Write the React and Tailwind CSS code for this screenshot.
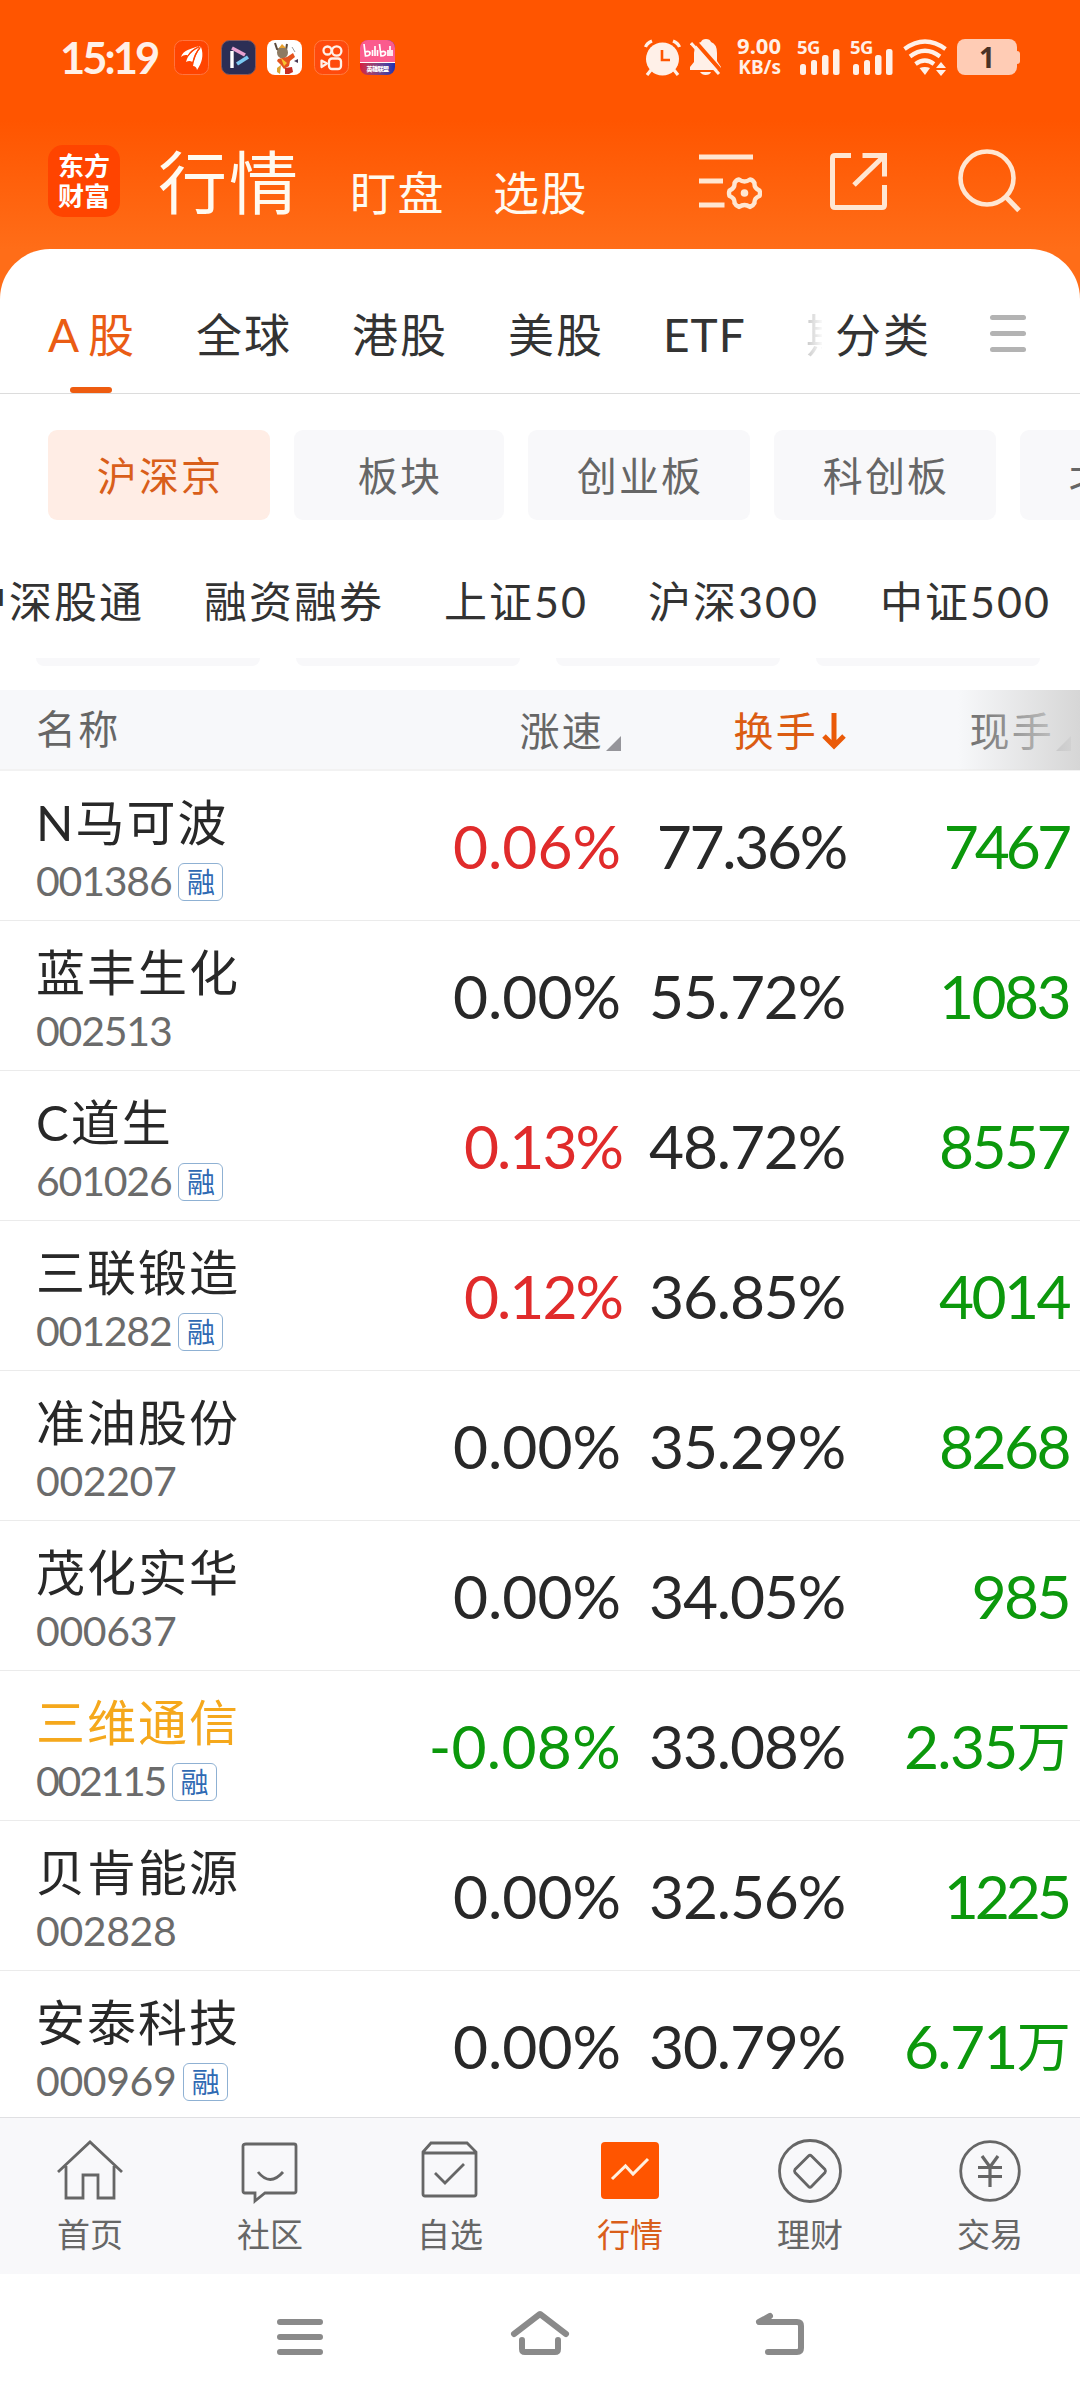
const quotes = [
  { name: 'N马可波', code: '001386', margin: true, speed: '0.06%', turnover: '77.36%', hand: '7467' },
  { name: '蓝丰生化', code: '002513', speed: '0.00%', turnover: '55.72%', hand: '1083' },
  { name: 'C道生', code: '601026', margin: true, speed: '0.13%', turnover: '48.72%', hand: '8557' },
  { name: '三联锻造', code: '001282', margin: true, speed: '0.12%', turnover: '36.85%', hand: '4014' },
  { name: '准油股份', code: '002207', speed: '0.00%', turnover: '35.29%', hand: '8268' },
  { name: '茂化实华', code: '000637', speed: '0.00%', turnover: '34.05%', hand: '985' },
  { name: '三维通信', code: '002115', margin: true, watched: true, speed: '-0.08%', turnover: '33.08%', hand: '2.35万' },
  { name: '贝肯能源', code: '002828', speed: '0.00%', turnover: '32.56%', hand: '1225' },
  { name: '安泰科技', code: '000969', margin: true, speed: '0.00%', turnover: '30.79%', hand: '6.71万' },
];

function speedColor(v) {
  if (v.startsWith('-')) return 'text-[#0c980c]';
  return v === '0.00%' ? 'text-[#282828]' : 'text-[#e02b2b]';
}

// Letter spacing by column; values with a 1 are set a little tighter.
function codeSpacing(v) {
  const ones = v.split('1').length - 1;
  if (ones > 1) return 'tracking-[-2.300px]';
  return ones ? 'tracking-[-1.200px]' : 'tracking-[-0.400px]';
}

function speedSpacing(v) {
  if (v.startsWith('-')) return 'tracking-[0.300px]';
  return v.includes('1') ? 'tracking-[-2px] mr-[-1px]' : 'tracking-normal';
}

function turnoverSpacing(v) {
  return v.startsWith('77') ? 'tracking-[-2.300px] mr-[-1px]' : 'tracking-[-1.200px]';
}

function handSpacing(v) {
  if (v.includes('万')) return 'tracking-[-1.700px]';
  return v === '7467' || v === '1225' ? 'tracking-[-4px] pr-[1px]' : 'tracking-[-2.600px]';
}

function AppBadges() {
  return (
    <div className="ml-[17px] flex gap-[11.500px]">
      <svg width="35" height="35" viewBox="0 0 35 35">
        <rect x=".5" y=".5" width="34" height="34" rx="8" fill="#ff4400" stroke="#ff7440" />
        <path d="M7 17C9 10 17 9 25 6C19 9 15 12 14 15.500C11 14.500 9 15.500 7 17Z" fill="#fff" />
        <path d="M12 22C14 14 20 9 26.500 6C22 11 20 16 18.500 22C16 20.500 14 21 12 22Z" fill="#fff" />
        <path d="M19 26C20 19 23 12 27 7C30 15 28 23 23 30C22.500 27 21 26 19 26Z" fill="#fff" />
        <path d="M14 16Q18 10 25 7M19 22Q21 13 26 8" stroke="#ff4400" strokeWidth="1.200" fill="none" />
      </svg>
      <svg width="35" height="35" viewBox="0 0 35 35">
        <rect x=".5" y=".5" width="34" height="34" rx="8" fill="#2c2e55" stroke="#8a5a5a" />
        <path d="M11 11V28" stroke="#fff" strokeWidth="3.4" />
        <path d="M11 8L24 15" stroke="#e9a2d2" strokeWidth="3.6" />
        <path d="M16 24L27 17" stroke="#7cc8f2" strokeWidth="3.8" />
      </svg>
      <svg width="35" height="35" viewBox="0 0 35 35">
        <rect width="35" height="35" rx="8" fill="#fff" />
        <path d="M8 3L10 9L12 10M20 4L19 10" fill="none" stroke="#5b4a3c" strokeWidth="2" />
        <ellipse cx="15.500" cy="12.500" rx="5.500" ry="6" fill="#8d7a62" />
        <path d="M12 8L15 4L19 8Z" fill="#e8a02d" />
        <path d="M11 19L20 17L26 13L28 17L23 21L22 26L17 29L14 25L10 21Z" fill="#e5531d" />
        <path d="M14 18L20 23L17 26Z" fill="#f7c531" />
        <path d="M10 28L14 25L13 34L10 32Z" fill="#dca32f" />
        <path d="M18 28L25 27L26 32L22 34H18Z" fill="#c62d22" />
        <path d="M27 21L31 19L31 23Z" fill="#473752" />
        <path d="M25 7L28 12" stroke="#999" />
      </svg>
      <svg width="35" height="35" viewBox="0 0 35 35" fill="none">
        <rect x=".5" y=".5" width="34" height="34" rx="8" fill="#ff4a0c" stroke="#ff7a40" />
        <circle cx="13.500" cy="10.500" r="4" stroke="#fff0e8" strokeWidth="2.300" />
        <circle cx="22.700" cy="11" r="4.700" stroke="#fff0e8" strokeWidth="2.300" />
        <rect x="15" y="18.500" width="12" height="10.500" rx="3" stroke="#fff0e8" strokeWidth="2.300" />
        <path d="M7.500 20.500L13 23.500L7.500 27Z" stroke="#fff0e8" strokeWidth="2.200" strokeLinejoin="round" />
      </svg>
      <div className="flex h-[35px] w-[35px] flex-col overflow-hidden rounded-[8px] bg-gradient-to-r from-[#d8173d] to-[#1c2fb4]">
        <div className="flex h-[23px] items-center justify-center border-b border-white bg-[#fb5b8e]">
          <svg width="31" height="15" viewBox="0 0 31 15" fill="none" stroke="#fff" strokeWidth="1.700">
            <path d="M2 1L3.500 13Q8.500 13 8 9.500Q7 7.500 3 9M10.500 7V13M13 3V13M15.500 7V13M17.500 1L19 13Q24 13 23.500 9.500Q22.500 7.500 19 9M26 7V13M28 3V13M30 7V13" />
          </svg>
        </div>
        <span className="text-center text-[6px] leading-[11px] font-black tracking-[-0.500px] whitespace-nowrap text-white">英雄联盟</span>
      </div>
    </div>
  );
}

function Signal() {
  return (
    <div className="relative h-[36px] w-[43px]">
      <span className="absolute top-[-1px] left-0 font-['Noto_Sans'] text-[18.500px] leading-[17px] font-bold tracking-[-0.500px] text-[#fff0e8]">5G</span>
      <svg className="absolute right-0 bottom-0" width="40" height="26" fill="#fff0e8">
        <rect x="0" y="15" width="6" height="11" rx="2.500" />
        <rect x="11" y="11" width="6" height="15" rx="2.500" />
        <rect x="22" y="6" width="6.500" height="20" rx="2.500" />
        <rect x="33" y="0" width="6.500" height="26" rx="2.500" />
      </svg>
    </div>
  );
}

function StatusBar() {
  return (
    <div className="flex h-[114px] items-center pl-[60px] pr-[60px]">
      <span className="w-[97px] font-['Lato'] text-[43.500px] leading-[44px] font-bold tracking-[-3px] whitespace-nowrap text-[#fff0e8]">15:19</span>
      <AppBadges />
      <div className="ml-auto flex items-center">
        <svg width="37" height="37" viewBox="0 0 37 37">
          <circle cx="18.500" cy="20" r="16.500" fill="#fff0e8" />
          <path d="M18 11V21H26" fill="none" stroke="#ff5500" strokeWidth="2.600" />
          <path d="M1.500 8Q3 4 8 2M35.500 8Q34 4 29 2M7 31L3 36M30 31L34 36" stroke="#fff0e8" strokeWidth="3.200" fill="none" />
        </svg>
        <svg className="ml-[9px]" width="32" height="37" viewBox="0 0 32 37">
          <path d="M0 31V28L4 23V14Q5 4 11 3Q12 0 16 0Q20 0 21 3Q27 5 27 14V22L31 28V31Z" fill="#fff0e8" />
          <path d="M10 33H21Q20 36 15.500 36Q12 36 10 33Z" fill="#fff0e8" />
          <path d="M2 2L30 34" stroke="#ff5500" strokeWidth="4" transform="translate(2 -1)" />
          <path d="M1 4L29 35" stroke="#fff0e8" strokeWidth="3" />
        </svg>
        <div className="-mt-[3px] ml-[11px] flex w-[48px] flex-col items-end font-['Noto_Sans'] text-[22px] leading-[22px] font-bold whitespace-nowrap text-[#fff0e8]">
          <span>9.00</span>
          <span className="text-[19px] leading-[22px]">KB/s</span>
        </div>
        <div className="ml-[16px] flex gap-[10px]">
          <Signal />
          <Signal />
        </div>
        <svg className="ml-[10px]" width="44" height="37" viewBox="0 0 44 37" fill="none" stroke="#fff0e8" strokeWidth="4.200">
          <path d="M1.500 10Q22 -5 42.500 10" />
          <path d="M7 17.500Q22 6 37 17.500" />
          <path d="M12.500 25Q22 18 31 25" />
          <path d="M16.500 29Q22 27 27 29L22 36Z" fill="#fff0e8" stroke="none" />
          <path d="M38 23L43 29H33ZM38 37L43 31H33Z" fill="#fff0e8" stroke="none" />
        </svg>
        <div className="ml-[10px] flex items-center">
          <div className="flex h-[36px] w-[60px] items-center justify-center rounded-[8px] bg-[#ffccb5] font-['Noto_Sans'] text-[28px] leading-[28px] font-bold text-[#4a3226]">1</div>
          <div className="h-[13px] w-[3px] rounded-r-[3px] bg-[#ffccb5]" />
        </div>
      </div>
    </div>
  );
}

function Header() {
  return (
    <div className="flex h-[135px] items-start pl-[48px] pr-[58px] text-[#fffaf0]">
      <div className="mt-[31px] flex h-[72px] w-[72px] flex-col items-center justify-center rounded-[15px] bg-[#ff4400] text-[26px] leading-[30px] font-bold text-white">
        <span>东方</span>
        <span>财富</span>
      </div>
      <span className="ml-[38px] mt-[29px] w-[146px] text-[69px] leading-[80px] tracking-[2px] whitespace-nowrap">行情</span>
      <span className="ml-[46px] mt-[53px] w-[96px] text-[46px] leading-[52px] tracking-[1.500px] whitespace-nowrap">盯盘</span>
      <span className="ml-[47px] mt-[53px] w-[96px] text-[46px] leading-[52px] tracking-[1.500px] whitespace-nowrap">选股</span>
      <svg className="ml-auto mt-[38px]" width="63" height="60" viewBox="0 0 63 60" fill="none" stroke="#ffe6d2" strokeWidth="5">
        <path d="M0 5H54M0 29H24M0 53H25.500" />
        <circle cx="45.500" cy="41" r="3.800" fill="#ffe6d2" stroke="none" />
        <path strokeWidth="4.400" strokeLinejoin="round" d="M40 27.500Q45.500 31.500 51 27.500Q54 28 55.500 31Q55 36 60.500 38.500Q61.500 41 60.500 44Q55 46 55.500 51Q54 54 51 55Q45.500 51 40 55Q37 54 35.500 51Q36 46 30.500 44Q29.500 41 30.500 38.500Q36 36 35.500 31Q37 28 40 27.500Z" />
      </svg>
      <svg className="ml-[67px] mt-[37px]" width="60" height="62" viewBox="0 0 60 62" fill="none" stroke="#ffe6d2" strokeWidth="5">
        <path d="M22 4.500H6Q3.500 4.500 3.500 7V54Q3.500 56.500 6 56.500H53Q55.500 56.500 55.500 54V34" />
        <path d="M33.500 4.500H55.500V25.500M55 5L25 34" />
      </svg>
      <svg className="ml-[69px] mt-[34px]" width="64" height="66" viewBox="0 0 64 66" fill="none" stroke="#ffe6d2" strokeWidth="4.600">
        <circle cx="29" cy="30" r="26.500" />
        <path d="M48 49L61 62.500" strokeWidth="5" />
      </svg>
    </div>
  );
}

function MarketTabs() {
  return (
    <div className="flex h-[145px] items-center border-b border-[#dcdcdc] pl-[48px] text-[46px] leading-[60px] tracking-[2px] whitespace-nowrap text-[#333]">
      <div className="relative flex h-full w-[86px] items-center text-[#ea5c14]">
        <span className="mt-[28px] w-[40px] shrink-0">A</span>
        <span className="mt-[28px] shrink-0">股</span>
        <div className="absolute bottom-0 left-[22px] h-[6px] w-[42px] rounded-full bg-[#ee5c10]" />
      </div>
      <div className="mt-[28px] flex w-[688px] overflow-hidden pl-[62px]">
        <span className="w-[156px] shrink-0">全球</span>
        <span className="w-[156px] shrink-0">港股</span>
        <span className="w-[155px] shrink-0">美股</span>
        <span className="w-[143px] shrink-0 tracking-[1px]">ETF</span>
        <span className="w-[18px] shrink-0 overflow-hidden bg-gradient-to-r from-[#c8c8c8] to-white bg-clip-text text-transparent">期</span>
      </div>
      <span className="mt-[28px] ml-[13px]">分类</span>
      <div className="mt-[24px] ml-[59px] flex flex-col gap-[11px]">
        <div className="h-[5px] w-[36px] rounded-full bg-[#b3b3b3]" />
        <div className="h-[5px] w-[36px] rounded-full bg-[#b3b3b3]" />
        <div className="h-[5px] w-[36px] rounded-full bg-[#b3b3b3]" />
      </div>
    </div>
  );
}

function BoardChips() {
  const chip = 'flex h-[90px] shrink-0 items-center justify-center rounded-[9px] pt-[2px] pl-[2px] ';
  return (
    <div className="mt-[36px] flex gap-[24px] overflow-hidden pl-[48px] text-[40px] leading-[48px] tracking-[2.200px] whitespace-nowrap text-[#666]">
      <div className={chip + 'w-[222px] bg-[#ffede5] text-[#d95e1a]'}>沪深京</div>
      <div className={chip + 'w-[210px] bg-[#f8f8fa]'}>板块</div>
      <div className={chip + 'w-[222px] bg-[#f8f8fa]'}>创业板</div>
      <div className={chip + 'w-[222px] bg-[#f8f8fa]'}>科创板</div>
      <div className={chip + 'w-[222px] bg-[#f8f8fa]'}>北交所</div>
    </div>
  );
}

function IndexTabs() {
  return (
    <div className="mt-[52px] flex overflow-hidden text-[43px] leading-[60px] tracking-[2px] whitespace-nowrap text-[#333]">
      <span className="-ml-[36px] w-[240px] shrink-0">沪深股通</span>
      <span className="w-[240px] shrink-0">融资融券</span>
      <span className="w-[204px] shrink-0">上证50</span>
      <span className="w-[232px] shrink-0">沪深300</span>
      <span className="shrink-0">中证500</span>
    </div>
  );
}

function CardEdges() {
  return (
    <div className="mt-[26px] flex h-[32px] gap-[36px] overflow-hidden pl-[36px]">
      {[0, 1, 2, 3].map((i) => (
        <div key={i} className="h-[8px] w-[224px] shrink-0 rounded-b-[9px] bg-[#f8f8fa]" />
      ))}
    </div>
  );
}

function SortCorner() {
  return (
    <svg className="mt-[28px] ml-[2px]" width="15" height="15" viewBox="0 0 15 15">
      <path d="M15 0V15H0Z" fill="#95959a" />
    </svg>
  );
}

function TableHead() {
  return (
    <div className="relative grid h-[81px] grid-cols-[397px_224px_225px_225px] items-center border-b-2 border-[#f2f2f2] bg-[#f7f8fa] text-[40px] leading-[50px] tracking-[2.200px] text-[#666]">
      <span className="-mt-[1px] pl-[36px]">名称</span>
      <div className="flex items-center justify-end"><span className="mt-[3px]">涨速</span><SortCorner /></div>
      <div className="flex items-center justify-end text-[#db5c12]">
        <span className="mt-[3px]">换手</span>
        <svg className="ml-[4px] mt-[3px]" width="24" height="38" viewBox="0 0 24 38" fill="none" stroke="#ea5a08" strokeWidth="5">
          <path d="M12 1V33M2 24L12 34L22 24" />
        </svg>
      </div>
      <div className="flex items-center justify-end"><span className="mt-[3px]">现手</span><SortCorner /></div>
      <div className="absolute top-0 right-0 h-[80px] w-[122px] bg-gradient-to-r from-[#f3f3f300] to-[#d6d6d6]" />
    </div>
  );
}

function QuoteRow({ q }) {
  const cell = 'pt-[35px] text-right text-[60.500px] leading-[80px] whitespace-nowrap tabular-nums ';
  return (
    <div className="grid h-[150px] grid-cols-[397px_224px_224px_224px] border-b border-[#ebebeb]">
      <div className="pl-[36px]">
        <div className={'mt-[20px] text-[49px] leading-[62px] tracking-[2px] whitespace-nowrap ' + (q.watched ? 'text-[#f5a81c]' : 'text-[#282828]')}>{q.name}</div>
        <div className="flex h-[56px] items-center">
          <span className={'text-[41px] leading-[50px] text-[#6b6b6b] tabular-nums ' + codeSpacing(q.code)}>{q.code}</span>
          {q.margin && (
            <span className="ml-[7px] mt-[2px] flex h-[38px] w-[45px] items-center justify-center rounded-[6px] border-[1.500px] border-[#8fb1d3] text-[28px] leading-[32px] text-[#2f6ab3]">融</span>
          )}
        </div>
      </div>
      <span className={cell + speedSpacing(q.speed) + ' ' + speedColor(q.speed)}>{q.speed}</span>
      <span className={cell + 'text-[#282828] ' + turnoverSpacing(q.turnover)}>{q.turnover}</span>
      <span className={cell + 'text-[#0c980c] ' + handSpacing(q.hand)}>
        {q.hand.replace('万', '')}
        {q.hand.endsWith('万') && <span className="relative -top-[2px] text-[54px]">万</span>}
      </span>
    </div>
  );
}

const navIcons = {
  home: <path d="M2 34L34 4L66 34M10 28V60H27V37H42V60H58V28" />,
  social: (
    <>
      <path d="M10 6H58Q60 6 60 8V53Q60 55 58 55H29L19 63V55H9Q7 55 7 53V8Q7 6 10 6Z" />
      <path d="M22 34Q34 49 47 34" />
    </>
  ),
  picks: (
    <>
      <path d="M7 14L15 5H51L60 14V56Q60 58 58 58H9Q7 58 7 56ZM7 15H60" />
      <path d="M19 35L29 45L48 26" />
    </>
  ),
  market: (
    <>
      <rect x="5" y="4" width="58" height="57" rx="4" fill="#ff5500" stroke="none" />
      <path d="M16 41L29.500 28L37 36L52 21" stroke="#fff0e0" strokeWidth="3" />
    </>
  ),
  wealth: (
    <>
      <circle cx="34" cy="33" r="30.500" />
      <path d="M35.500 18L49 31.500Q50 33 49 34.500L35.500 48.500Q34 50 32.500 48.500L19 34.500Q18 33 19 31.500L32.500 18Q34 16.500 35.500 18Z" />
    </>
  ),
  trade: (
    <>
      <circle cx="34" cy="33" r="29.300" />
      <path d="M26 18L34 29L42 18M22 29.500H46M22 38.500H46M34 29V49" strokeWidth="3.200" />
    </>
  ),
};

function BottomNav() {
  const items = [['home', '首页'], ['social', '社区'], ['picks', '自选'], ['market', '行情'], ['wealth', '理财'], ['trade', '交易']];
  return (
    <div className="grid h-[157px] grid-cols-6 border-t border-[#e0e0e3] bg-[#f8f8fa]">
      {items.map(([icon, label]) => (
        <div key={icon} className={'flex flex-col items-center pt-[20px] text-[33px] leading-[40px] ' + (icon === 'market' ? 'text-[#d95e1a]' : 'text-[#666]')}>
          <svg width="68" height="68" viewBox="0 0 68 68" fill="none" stroke="#666" strokeWidth="2.800">{navIcons[icon]}</svg>
          <span className="mt-[8px]">{label}</span>
        </div>
      ))}
    </div>
  );
}

function SystemNav() {
  return (
    <div className="grid h-[126px] grid-cols-[240px_120px_120px_120px_120px_120px_240px] bg-white pt-[36px]">
      <svg className="col-start-2 justify-self-center" width="60" height="50" fill="none" stroke="#8a8a8a" strokeWidth="6" strokeLinecap="round">
        <path d="M10 12H50M10 27H50M10 42H50" />
      </svg>
      <svg className="col-start-4 justify-self-center" width="60" height="50" fill="none" stroke="#8a8a8a" strokeWidth="6" strokeLinecap="round" strokeLinejoin="round">
        <path d="M4 24L30 4L56 24M12 30V39Q12 42 15 42H45Q48 42 48 39V30" />
      </svg>
      <svg className="col-start-6 justify-self-center" width="60" height="50" fill="none" stroke="#8a8a8a" strokeWidth="6" strokeLinecap="round" strokeLinejoin="round">
        <path d="M20 6L9 12H47Q51 12 51 16V38Q51 42 47 42H18" />
      </svg>
    </div>
  );
}

export default function App() {
  return (
    <div className="flex h-[2400px] w-[1080px] flex-col overflow-hidden bg-white font-['Lato','Noto_Sans_CJK_SC',sans-serif]">
      <div className="h-[249px] shrink-0 bg-[linear-gradient(to_bottom,#ff5500_120px,#ff6d18_249px)]">
        <StatusBar />
        <Header />
      </div>
      <div className="h-[1868px] shrink-0 overflow-hidden bg-[#ff6d18]">
        <div className="rounded-t-[50px] bg-white">
          <MarketTabs />
          <BoardChips />
          <IndexTabs />
          <CardEdges />
          <TableHead />
          {quotes.map((q) => (
            <QuoteRow key={q.code} q={q} />
          ))}
        </div>
      </div>
      <BottomNav />
      <SystemNav />
    </div>
  );
}
